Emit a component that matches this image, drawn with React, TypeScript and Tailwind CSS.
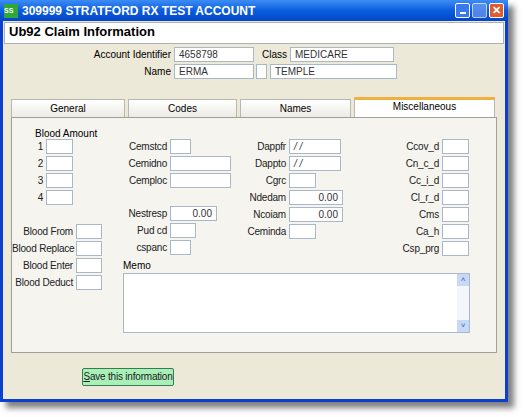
import React from "react";

const Box = ({ w, v, right, italic }: { w: number; v?: string; right?: boolean; italic?: boolean }) => (
  <div
    className={`h-[15px] shrink-0 border border-[#a9b8c8] bg-white px-1 text-[10px] leading-[13px] text-[#333] ${right ? "text-right" : ""} ${italic ? "italic" : ""}`}
    style={{ width: w }}
  >
    {v}
  </div>
);

const Row = ({ label, lw, w, v, right, italic, h = 17 }: { label: string; lw: number; w: number; v?: string; right?: boolean; italic?: boolean; h?: number }) => (
  <div className="flex items-center" style={{ height: h }}>
    <div className="shrink-0 whitespace-nowrap pr-[3px] text-right text-[10px] tracking-[-0.2px] text-[#222]" style={{ width: lw }}>{label}</div>
    <Box w={w} v={v} right={right} italic={italic} />
  </div>
);

export default function App() {
  return (
    <div className="relative h-[417px] w-[524px] bg-white" style={{ fontFamily: '"Liberation Sans", Arial, sans-serif' }}>
      <div className="flex h-[402px] w-[508px] flex-col border-[3px] border-t-0 border-[#0a3fd0] bg-[#ece9d8] shadow-[6px_6px_6px_rgba(0,0,0,0.5)]">
        {/* title bar */}
        <div className="-mx-[3px] flex h-[21px] items-center bg-gradient-to-b from-[#3c8cf5] via-[#0a5de0] to-[#0645c8] px-[4px]">
          <div className="mr-[4px] h-[14px] w-[14px] bg-[#2fa83a] text-[7px] font-bold leading-[14px] text-white">SS</div>
          <div className="flex-1 text-[12px] font-bold text-white">309999 STRATFORD RX TEST ACCOUNT</div>
          <div className="flex gap-[2px]">
            <div className="flex h-[15px] w-[15px] items-end justify-center rounded-[2px] border border-white bg-[#3a78f0] pb-[3px]"><div className="h-[2px] w-[6px] bg-white" /></div>
            <div className="h-[15px] w-[15px] rounded-[2px] border border-white bg-[#6e9af0] opacity-70" />
            <div className="flex h-[15px] w-[15px] items-center justify-center rounded-[2px] border border-white bg-[#e05a30] text-[11px] font-bold leading-none text-white">✕</div>
          </div>
        </div>
        <div className="mx-[1px] mt-[1px] h-[22px] border border-[#b0b0b0] bg-white px-[4px] text-[13px] font-bold leading-[18px] text-black">Ub92 Claim Information</div>
        {/* account fields */}
        <div className="mt-[3px] flex flex-col gap-[2px]">
          <div className="flex items-center">
            <div className="w-[171px] pr-[3px] text-right text-[10px]">Account Identifier</div>
            <Box w={80} v="4658798" />
            <div className="w-[36px] pr-[3px] text-right text-[10px]">Class</div>
            <Box w={104} v="MEDICARE" />
          </div>
          <div className="flex items-center">
            <div className="w-[171px] pr-[3px] text-right text-[10px]">Name</div>
            <Box w={80} v="ERMA" />
            <div className="ml-[2px]"><Box w={11} /></div>
            <div className="ml-[3px]"><Box w={127} v="TEMPLE" /></div>
          </div>
        </div>
        {/* tabs */}
        <div className="mt-[18px] flex h-[20px] items-end pl-[8px] text-[10px]">
          <div className="mr-[3px] h-[18px] w-[114px] border border-b-0 border-[#b8b8b0] bg-gradient-to-b from-white to-[#ecebe4] text-center leading-[18px]">General</div>
          <div className="mr-[3px] h-[18px] w-[109px] border border-b-0 border-[#b8b8b0] bg-gradient-to-b from-white to-[#ecebe4] text-center leading-[18px]">Codes</div>
          <div className="mr-[3px] h-[18px] w-[111px] border border-b-0 border-[#b8b8b0] bg-gradient-to-b from-white to-[#ecebe4] text-center leading-[18px]">Names</div>
          <div className="h-[20px] w-[141px] border border-b-0 border-t-[3px] border-[#b8b8b0] border-t-[#f0b040] bg-white text-center leading-[14px]">Miscellaneous</div>
        </div>
        <div className="mx-[8px] h-[236px] border border-[#a0a098] bg-[#f5f4ef]">
          <div className="flex pt-[11px]">
            {/* col 1 */}
            <div className="flex w-[100px] shrink-0 flex-col">
              <div className="h-[9px] whitespace-nowrap pl-[23px] text-[10px] leading-[9px]">Blood Amount</div>
              {["1", "2", "3", "4"].map((n) => <Row key={n} label={n} lw={34} w={27} />)}
              <div className="h-[17px]" />
              <Row label="Blood From" lw={64} w={26} />
              <Row label="Blood Replace" lw={64} w={26} />
              <Row label="Blood Enter" lw={64} w={26} />
              <Row label="Blood Deduct" lw={64} w={26} />
            </div>
            {/* col 2 */}
            <div className="flex w-[110px] shrink-0 flex-col pt-[9px]">
              <Row label="Cemstcd" lw={58} w={21} />
              <Row label="Cemidno" lw={58} w={61} />
              <Row label="Cemploc" lw={58} w={61} />
              <div className="h-[16px]" />
              <Row label="Nestresp" lw={58} w={47} v="0.00" right />
              <Row label="Pud cd" lw={58} w={26} />
              <Row label="cspanc" lw={58} w={21} />
            </div>
            {/* col 3 */}
            <div className="flex w-[135px] shrink-0 flex-col pt-[9px]">
              <Row label="Dappfr" lw={67} w={52} v="/ /" italic />
              <Row label="Dappto" lw={67} w={52} v="/ /" italic />
              <Row label="Cgrc" lw={67} w={27} />
              <Row label="Ndedam" lw={67} w={54} v="0.00" right />
              <Row label="Ncoiam" lw={67} w={54} v="0.00" right />
              <Row label="Ceminda" lw={67} w={27} />
            </div>
            {/* col 4 */}
            <div className="flex flex-col pt-[9px]">
              {["Ccov_d", "Cn_c_d", "Cc_i_d", "Cl_r_d", "Cms", "Ca_h", "Csp_prg"].map((l) => (
                <Row key={l} label={l} lw={85} w={27} />
              ))}
            </div>
          </div>
          <div className="ml-[111px] mt-[-30px] w-[347px]">
            <div className="h-[12px] text-[10px] leading-[10px]">Memo</div>
            <div className="flex h-[60px] border border-[#a9b8c8] bg-white">
              <div className="flex-1" />
              <div className="flex w-[12px] flex-col justify-between bg-[#f4f6fb]">
                <div className="h-[12px] bg-[#c8d8f8] text-center text-[8px] leading-[12px] text-[#4060a0]">˄</div>
                <div className="h-[12px] bg-[#c8d8f8] text-center text-[8px] leading-[12px] text-[#4060a0]">˅</div>
              </div>
            </div>
          </div>
        </div>
        <div className="ml-[79px] mt-[15px] h-[18px] w-[92px] whitespace-nowrap rounded-[2px] border border-[#3a7a50] bg-[#a8f0b8] text-center text-[10px] leading-[16px] tracking-[-0.2px] text-[#222]">
          <span className="underline">S</span>ave this information
        </div>
      </div>
    </div>
  );
}
